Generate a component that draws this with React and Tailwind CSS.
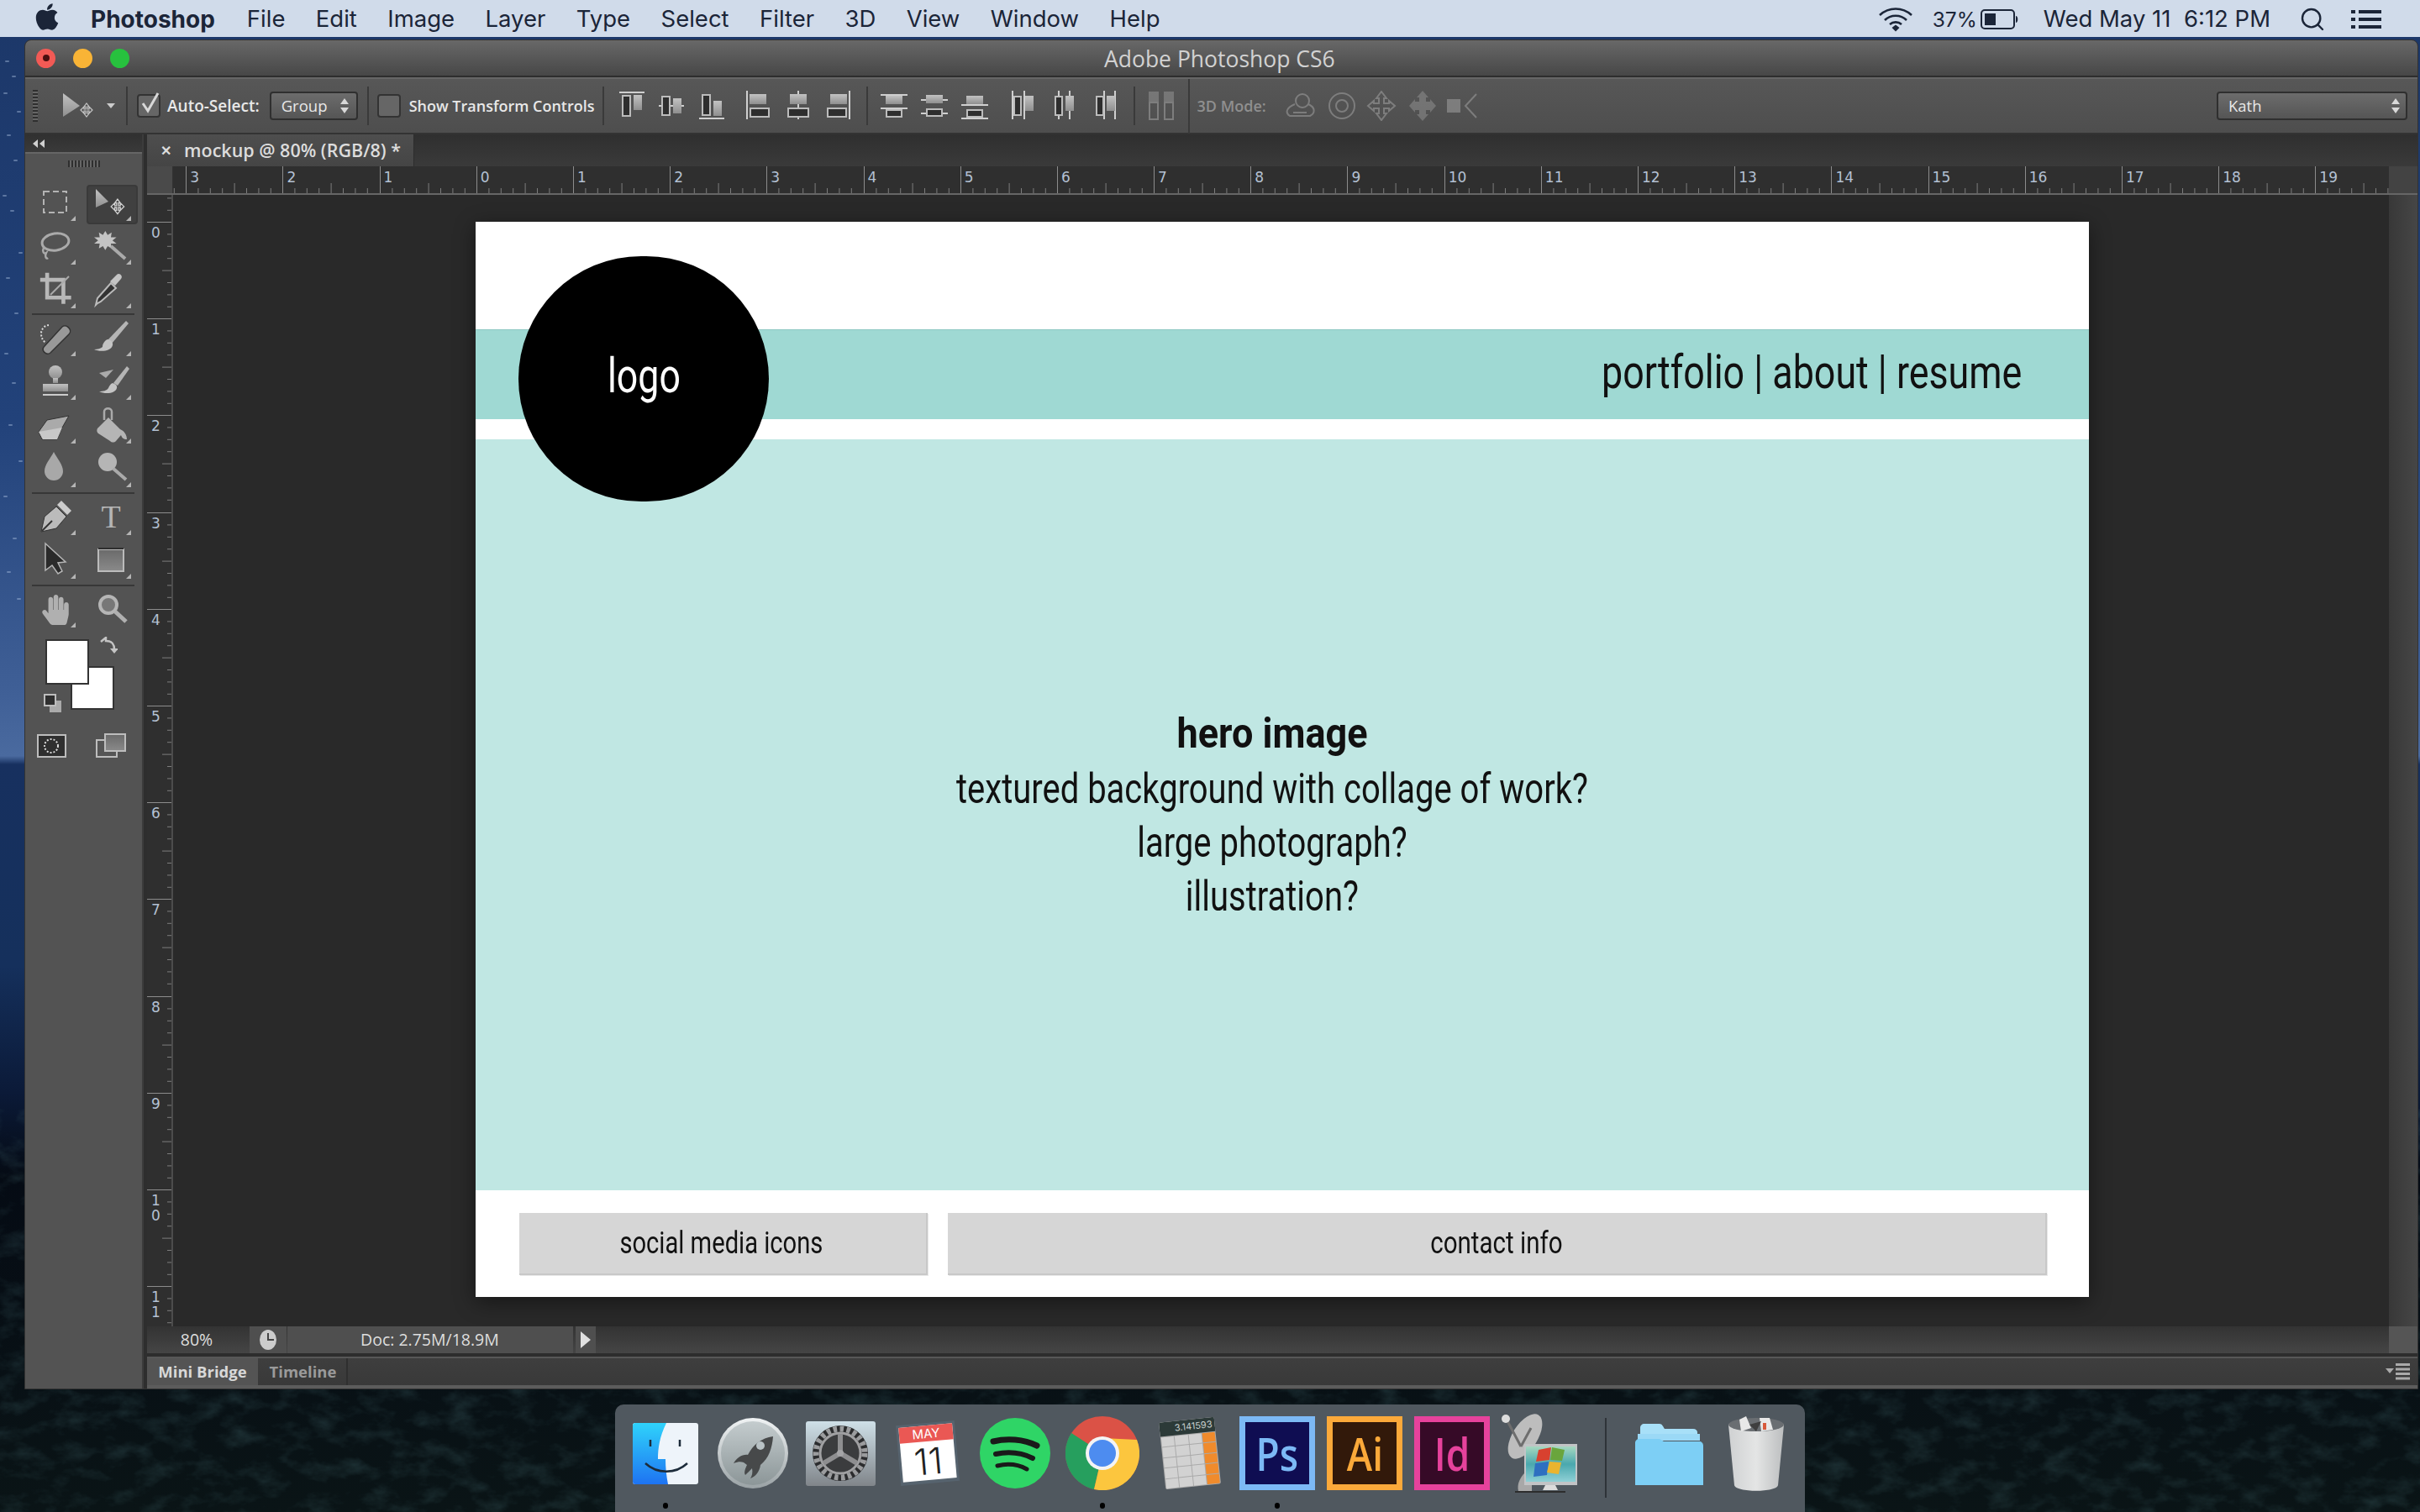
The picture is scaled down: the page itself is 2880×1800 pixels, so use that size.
import React from "react";
import { FaApple, FaHandPaper } from "react-icons/fa";
import { Search } from "lucide-react";

const narrow = "font-['Roboto',sans-serif]";
const ui = "font-['Open_Sans',sans-serif]";

const menus = ["File", "Edit", "Image", "Layer", "Type", "Select", "Filter", "3D", "View", "Window", "Help"];

const MenuBar = () => (
  <div className="relative flex h-[44px] items-center bg-[#d0dbea] pt-[2px] font-['Inter',sans-serif] text-[27.5px] leading-none text-[#1b2538]">
    <FaApple className="ml-[41px] mt-[-6px] h-[36px] w-[30px]" />
    <span className="ml-[37px] text-[28px] font-bold">Photoshop</span>
    <div className="ml-[38px] flex gap-[36.4px]">
      {menus.map((m) => (
        <span key={m}>{m}</span>
      ))}
    </div>
    <div className="ml-auto flex items-center">
      <svg width="42" height="30" viewBox="0 0 42 30" fill="none" stroke="#1b2538" strokeWidth="2.6">
        <path d="M2 10c11-10 27-10 38 0" />
        <path d="M8 16c7-7 19-7 26 0" />
        <path d="M14 21c4-3.500 10-3.500 14 0" />
        <path d="M16.500 25l4.500-3.500 4.500 3.500-4.500 4.500z" fill="#1b2538" stroke="none" />
      </svg>
      <span className="ml-[23px] text-[24.5px]">37%</span>
      <svg className="ml-[4px]" width="46" height="26" viewBox="0 0 46 26" fill="none">
        <rect x="1" y="2" width="39" height="22" rx="4" stroke="#1b2538" strokeWidth="2" />
        <rect x="5" y="6" width="13" height="14" fill="#1b2538" />
        <path d="M42 9c3 0 3 8 0 8z" fill="#1b2538" />
      </svg>
      <span className="ml-[29px] whitespace-pre text-[27.5px]">Wed May 11  6:12 PM</span>
      <Search className="ml-[34px] h-[32px] w-[32px]" strokeWidth={1.8} />
      <svg className="ml-[30px] mr-[46px]" width="36" height="22" viewBox="0 0 36 22" fill="#1b2538">
        <rect x="0" y="0" width="5" height="4" />
        <rect x="9" y="0" width="27" height="4" />
        <rect x="0" y="9" width="5" height="4" />
        <rect x="9" y="9" width="27" height="4" />
        <rect x="0" y="18" width="5" height="4" />
        <rect x="9" y="18" width="27" height="4" />
      </svg>
    </div>
  </div>
);

const Light = ({ bg, children }) => <span className={`h-[23px] w-[23px] rounded-full ${bg} flex items-center justify-center`}>{children}</span>;

const TitleBar = () => (
  <div className="relative flex h-[44px] items-center border-b-2 border-[#2e2e2e] bg-[linear-gradient(#686868,#474747)] pl-[13px]">
    <div className="flex gap-[21px]">
      <Light bg="bg-[#f25a55]">
        <span className="h-[8px] w-[8px] rounded-full bg-[#4a0f0f]" />
      </Light>
      <Light bg="bg-[#f9b436]" />
      <Light bg="bg-[#27c13e]" />
    </div>
    <span className={`${ui} absolute left-[1284px] top-[6px] text-[26.5px] leading-[32px] text-[#d2d2d2]`}>Adobe Photoshop CS6</span>
  </div>
);

const Sep = ({ ml, full }) => <span className={`w-[2px] shrink-0 bg-[#3a3a3a] ${full ? "h-[65px]" : "h-[46px]"} ${ml}`} />;

const Updown = () => (
  <svg width="12" height="20" viewBox="0 0 12 20" fill="#d8d8d8">
    <path d="M6 1l5 7H1zM6 19l5-7H1z" />
  </svg>
);

const Check = ({ ml, checked }) => (
  <span className={`relative h-[28px] w-[28px] shrink-0 rounded-[4px] border-2 border-[#333] bg-[#666] ${ml}`}>
    {checked && (
      <svg className="absolute -top-[6px] left-[3px]" width="24" height="30" viewBox="0 0 24 30" fill="none" stroke="#d8d8d8" strokeWidth="3">
        <path d="M2 15l6 9L20 3" />
      </svg>
    )}
  </span>
);

// a bar with two blocks, used by all of the align buttons
const AlignIcon = ({ ml, w = 30, bars, out, solid }) => (
  <svg className={`shrink-0 ${ml}`} width={w} height="36" viewBox={`0 0 ${w} 36`}>
    {bars.map((b, i) => (
      <rect key={i} x={b[0]} y={b[1]} width={b[2]} height={b[3]} fill="#cfcfcf" />
    ))}
    {out.map((r, i) => (
      <rect key={i} x={r[0] + 1} y={r[1] + 1} width={r[2] - 2} height={r[3] - 2} fill="#2e2e2e" stroke="#bcbcbc" strokeWidth="2" />
    ))}
    {solid.map((r, i) => (
      <rect key={i} x={r[0]} y={r[1]} width={r[2]} height={r[3]} fill="url(#ps-gray)" />
    ))}
  </svg>
);

const cross = "M2 9l4-4v3h2V5H6l3-4 3 4h-2v3h2V5l4 4-4 4v-3h-2v3h2l-3 4-3-4h2v-3H6v3z";

const OptionsBar = () => (
  <div className="flex h-[68px] items-center border-b-2 border-t-2 border-b-[#333] border-t-[#666] bg-[linear-gradient(#575757,#4e4e4e)] text-[#e8e8e8]">
    <div className="ml-[9px] h-[38px] w-[6px] bg-[repeating-linear-gradient(#2f2f2f_0_2px,#666_2px_4px)]" />
    <svg className="ml-[30px]" width="38" height="30" viewBox="0 0 38 30" fill="url(#ps-gray)">
      <path d="M0 0l20 15L0 28z" />
      <path d={cross} transform="translate(19 11)" fill="none" stroke="#c4c4c4" strokeWidth="1.200" />
    </svg>
    <svg className="ml-[14px]" width="10" height="6" viewBox="0 0 10 6" fill="#ccc">
      <path d="M0 0h10L5 6z" />
    </svg>
    <Sep ml="ml-[13px]" />
    <Check ml="ml-[11px]" checked />
    <span className={`${ui} ml-[8px] text-[19px] font-semibold`}>Auto-Select:</span>
    <div className={`${ui} ml-[12px] flex h-[34px] w-[105px] items-center justify-between rounded-[4px] border-2 border-[#2f2f2f] bg-[linear-gradient(#6c6c6c,#555)] pl-[12px] pr-[8px] text-[18.5px] font-medium`}>
      Group <Updown />
    </div>
    <Sep ml="ml-[11px]" />
    <Check ml="ml-[10px]" />
    <span className={`${ui} ml-[10px] text-[18px] font-semibold`}>Show Transform Controls</span>
    <Sep ml="ml-[9px]" />
    <AlignIcon ml="ml-[18px]" bars={[[0, 1, 30, 2]]} out={[[3, 5, 11, 26]]} solid={[[17, 5, 10, 18]]} />
    <AlignIcon ml="ml-[17px]" bars={[[0, 17, 30, 2]]} out={[[3, 6, 11, 24]]} solid={[[17, 9, 10, 18]]} />
    <AlignIcon ml="ml-[18px]" bars={[[0, 32, 30, 2]]} out={[[3, 4, 11, 26]]} solid={[[17, 12, 10, 18]]} />
    <AlignIcon ml="ml-[26px]" w={28} bars={[[0, 0, 2, 34]]} out={[[4, 20, 24, 12]]} solid={[[4, 4, 20, 12]]} />
    <AlignIcon ml="ml-[20px]" w={28} bars={[[13, 0, 2, 34]]} out={[[1, 20, 26, 12]]} solid={[[4, 4, 20, 12]]} />
    <AlignIcon ml="ml-[20px]" w={28} bars={[[26, 0, 2, 34]]} out={[[0, 20, 24, 12]]} solid={[[4, 4, 20, 12]]} />
    <Sep ml="ml-[19px]" />
    <AlignIcon ml="ml-[15px]" w={32} bars={[[0, 4, 32, 2], [0, 20, 32, 2]]} out={[[6, 22, 20, 10]]} solid={[[6, 6, 20, 10]]} />
    <AlignIcon ml="ml-[16px]" w={32} bars={[[0, 10, 32, 2], [0, 26, 32, 2]]} out={[[6, 21, 20, 10]]} solid={[[6, 5, 20, 10]]} />
    <AlignIcon ml="ml-[16px]" w={32} bars={[[0, 16, 32, 2], [0, 32, 32, 2]]} out={[[6, 22, 20, 10]]} solid={[[6, 6, 20, 10]]} />
    <AlignIcon ml="ml-[28px]" w={26} bars={[[0, 0, 2, 34], [14, 0, 2, 34]]} out={[[2, 6, 10, 24]]} solid={[[16, 6, 10, 18]]} />
    <AlignIcon ml="ml-[23px]" w={26} bars={[[6, 0, 2, 34], [19, 0, 2, 34]]} out={[[2, 6, 10, 24]]} solid={[[15, 6, 10, 18]]} />
    <AlignIcon ml="ml-[23px]" w={26} bars={[[11, 0, 2, 34], [24, 0, 2, 34]]} out={[[2, 6, 10, 24]]} solid={[[15, 6, 10, 18]]} />
    <Sep ml="ml-[21px]" />
    <svg className="ml-[16px] opacity-50" width="30" height="36" viewBox="0 0 30 36" fill="none" stroke="#aaa" strokeWidth="2">
      <rect x="1" y="14" width="10" height="20" />
      <rect x="19" y="14" width="10" height="20" />
      <rect x="0" y="1" width="12" height="12" fill="#999" stroke="none" />
      <rect x="18" y="1" width="12" height="12" fill="#999" stroke="none" />
    </svg>
    <Sep ml="ml-[17px]" full />
    <span className={`${ui} ml-[9px] text-[18px] font-semibold text-[#8f8f8f]`}>3D Mode:</span>
    <svg className="ml-[22px] opacity-60" width="230" height="36" viewBox="0 0 230 36" fill="none" stroke="#9a9a9a" strokeWidth="2">
      <circle cx="21" cy="12" r="8" />
      <path d="M12 16c-10 4-12 10-6 14h24c6-3 7-10-2-14" />
      <path d="M10 26h16" />
      <circle cx="68" cy="18" r="15" />
      <circle cx="68" cy="18" r="7" />
      <path d="M115 1l6 8h-3v6h6v-3l7 6-7 6v-3h-6v6h3l-6 8-6-8h3v-6h-6v3l-7-6 7-6v3h6V9h-3z" />
      <path d="M164 0l7 8h-3v5h5v-3l7 8-7 8v-3h-5v5h3l-7 8-7-8h3v-5h-5v3l-7-8 7-8v3h5V8h-3z" fill="#8a8a8a" stroke="none" />
      <rect x="193" y="10" width="16" height="16" fill="#9a9a9a" stroke="none" />
      <path d="M228 4l-13 14 13 14" />
    </svg>
    <div className={`${ui} ml-auto mr-[12px] flex h-[34px] w-[227px] items-center justify-between rounded-[4px] border-2 border-[#2f2f2f] bg-[linear-gradient(#6c6c6c,#555)] pl-[12px] pr-[6px] text-[18.5px] font-medium`}>
      Kath <Updown />
    </div>
  </div>
);

const Corner = () => <span className="absolute bottom-[4px] right-[9px] h-0 w-0 border-b-[6px] border-l-[6px] border-b-[#b5b5b5] border-l-transparent" />;

const Tool = ({ children, corner = true, selected }) => (
  <div className="relative flex h-full items-center justify-center">
    {selected && <span className="absolute bottom-[0px] left-[4px] right-[1px] top-[5px] rounded-[4px] border-2 border-[#3a3a3a] bg-[#404040]" />}
    <span className="relative flex">{children}</span>
    {corner && <Corner />}
  </div>
);

const Ic = ({ children }) => (
  <svg width="44" height="44" viewBox="0 0 44 44" fill="url(#ps-gray)" stroke="none">
    {children}
  </svg>
);

const toolRows = [
  [
    [
      <Ic key="a"><rect x="8" y="9" width="27" height="25" fill="none" stroke="#b4b4b4" strokeWidth="2" strokeDasharray="7 4" /></Ic>,
      <Ic key="b">
        <path d="M4 6l15 15L4 28z" />
        <path d={cross} transform="translate(20 17) scale(1.100)" fill="none" stroke="#d0d0d0" strokeWidth="1.200" />
      </Ic>,
      true,
    ],
    [
      <Ic key="a">
        <ellipse cx="22" cy="17" rx="16" ry="10" fill="none" stroke="#aaa" strokeWidth="3" transform="rotate(-8 22 17)" />
        <path d="M8 24c-2 4 0 8 3 6-2 4 0 8 2 6" fill="none" stroke="#aaa" strokeWidth="2.500" />
      </Ic>,
      <Ic key="b">
        <path d="M14 2l3 5 5-3-1 6 7 0-5 4 5 4-7 0 1 6-5-3-3 5-3-5-5 3 1-6-7 0 5-4-5-4 7 0-1-6 5 3z" fill="#c4c4c4" transform="translate(2 2) scale(.95)" />
        <path d="M22 22l17 15" stroke="#aaa" strokeWidth="4" />
      </Ic>,
    ],
    [
      <Ic key="a">
        <path d="M11 2v32h31M2 11h30V42" fill="none" stroke="#b8b8b8" strokeWidth="5" transform="translate(2 0) scale(.92)" />
        <path d="M16 28l22-22" stroke="#aaa" strokeWidth="2" />
      </Ic>,
      <Ic key="b">
        <path d="M6 38l-2 2 2-8 16-18 6 6-18 16z" fill="#333" stroke="#bbb" strokeWidth="2" />
        <path d="M21 12l8-8c3-3 8 2 5 5l-7 8z" fill="#c4c4c4" />
      </Ic>,
    ],
  ],
  [
    [
      <Ic key="a">
        <path d="M9 32L30 9c5-4 13 4 8 9L16 40c-5 4-12-3-7-8z" fill="#999" stroke="#333" strokeWidth="1.500" />
        <path d="M14 7a10 10 0 0 0-9 10c0 5 2 8 5 11" fill="none" stroke="#ddd" strokeWidth="2" strokeDasharray="2 2" />
      </Ic>,
      <Ic key="b">
        <path d="M40 2l3 3-20 24-5-4z" fill="#b5b5b5" />
        <path d="M18 24c-3 1-6 5-6 9-2 2-6 3-10 3 6 3 20 3 22-5 1-3-2-6-6-7z" fill="#c4c4c4" />
      </Ic>,
    ],
    [
      <Ic key="a">
        <circle cx="22" cy="11" r="8" />
        <path d="M19 18h6v6h-6z" />
        <rect x="7" y="25" width="30" height="9" />
        <rect x="7" y="37" width="30" height="2" fill="#ccc" />
      </Ic>,
      <Ic key="b">
        <path d="M41 4l3 3-14 20-5-3z" fill="#b5b5b5" />
        <path d="M24 24c-3 1-4 4-5 6-2 3-6 4-11 4 8 4 20 2 21-4 1-3-2-5-5-6z" fill="#c4c4c4" />
        <path d="M25 8L8 12l8 6" fill="#aaa" />
      </Ic>,
    ],
    [
      <Ic key="a">
        <path d="M2 30l10-14 26-5-8 14-6 14H6z" fill="#aaa" stroke="#333" strokeWidth="1" />
        <path d="M2 30l5 9h17l6-14z" fill="#c8c8c8" />
      </Ic>,
      <Ic key="b">
        <path d="M6 26l13-13 14 14c5 2 8 7 8 12-4 0-6-2-7-5l-6 7c-2 2-5 2-7 0L7 32c-2-2-2-4-1-6z" fill="#b5b5b5" />
        <path d="M14 16V6c0-5 9-5 9 0v10" fill="none" stroke="#aaa" strokeWidth="2.500" />
      </Ic>,
    ],
    [
      <Ic key="a"><path d="M20 2c4 8 11 15 11 23a11 11 0 0 1-22 0c0-8 7-15 11-23z" fill="#a8a8a8" /></Ic>,
      <Ic key="b">
        <circle cx="18" cy="14" r="11" fill="#b5b5b5" />
        <path d="M25 22l15 13" stroke="#aaa" strokeWidth="4" />
      </Ic>,
    ],
  ],
  [
    [
      <Ic key="a">
        <path d="M5 40l4-18 14-12 12 12-12 14z" fill="#bbb" stroke="#333" strokeWidth="1" />
        <path d="M6 39l12-12" stroke="#333" strokeWidth="2" />
        <path d="M24 8l5-5 12 12-5 5z" fill="#ccc" />
      </Ic>,
      <span key="b" className="flex h-[44px] w-[44px] items-center justify-center font-['Liberation_Serif',serif] text-[38px] leading-none text-[#b5b5b5]">T</span>,
    ],
    [
      <Ic key="a"><path d="M10 2l24 22-9 1 5 10-5 3-7-10-8 6z" fill="#2a2a2a" stroke="#b5b5b5" strokeWidth="1.500" /></Ic>,
      <Ic key="b">
        <rect x="7" y="9" width="30" height="26" fill="url(#ps-dark)" stroke="#bbb" strokeWidth="2" />
        <rect x="7" y="7" width="30" height="2" fill="#2f2f2f" />
      </Ic>,
    ],
  ],
];

const ToolPanel = () => (
  <div className="relative flex w-[141px] shrink-0 flex-col bg-[#535353] border-r-2 border-[#3c3c3c]">
    <div className="flex h-[23px] items-center bg-[linear-gradient(#303030,#3a3a3a)] pl-[8px] border-b-2 border-[#666]">
      <svg width="16" height="10" viewBox="0 0 16 10" fill="#d0d0d0">
        <path d="M7 0v10L1 5zM15 0v10L9 5z" />
      </svg>
    </div>
    <div className="mx-auto mt-[8px] h-[8px] w-[38px] bg-[repeating-linear-gradient(90deg,#2f2f2f_0_2px,#666_2px_4px)]" />
    <div className="grid grid-cols-[66px_66px] pl-[3px] pt-[16px]">
      {toolRows.map((group, g) => (
        <React.Fragment key={g}>
          {g > 0 && <div className="col-span-2 mx-[5px] mb-[1px] mt-[2px] h-[2px] bg-[#373737]" />}
          {group.map((row, r) => (
            <React.Fragment key={r}>
              <div className="h-[52px]"><Tool>{row[0]}</Tool></div>
              <div className="h-[52px]"><Tool selected={row[2]}>{row[1]}</Tool></div>
            </React.Fragment>
          ))}
        </React.Fragment>
      ))}
      <div className="col-span-2 mx-[5px] mb-[3px] mt-[3px] h-[2px] bg-[#373737]" />
      <div className="h-[50px]">
        <Tool>
          <FaHandPaper className="h-[36px] w-[36px] text-[#b0b0b0]" />
        </Tool>
      </div>
      <div className="h-[50px]">
        <Tool corner={false}>
          <Ic>
            <circle cx="19" cy="16" r="10" fill="#777" stroke="#b5b5b5" strokeWidth="4" />
            <path d="M27 24l13 12" stroke="#b0b0b0" strokeWidth="5" />
          </Ic>
        </Tool>
      </div>
    </div>
    <div className="relative ml-[24px] mt-[10px] h-[86px] w-[84px]">
      <span className="absolute left-[30px] top-[32px] h-[52px] w-[52px] border-2 border-[#333] bg-white" />
      <span className="absolute left-0 top-0 h-[54px] w-[52px] border-2 border-[#333] bg-white" />
      <svg className="absolute left-[64px] top-[-3px]" width="22" height="22" viewBox="0 0 22 22" fill="none" stroke="#c4c4c4" strokeWidth="2.500">
        <path d="M2 6l6-5v4c7 0 10 3 10 10" />
        <path d="M13 14h10l-5 6z" fill="#c4c4c4" stroke="none" />
      </svg>
      <svg className="absolute -left-[2px] top-[65px]" width="21" height="22" viewBox="0 0 21 22">
        <rect x="7" y="8" width="14" height="14" fill="#aaa" />
        <rect x="1" y="1" width="13" height="13" fill="#2f2f2f" stroke="#bdbdbd" strokeWidth="2" />
      </svg>
    </div>
    <div className="ml-[14px] mt-[26px] flex items-start gap-[34px]">
      <svg width="36" height="30" viewBox="0 0 36 30" fill="none">
        <rect x="1" y="2" width="33" height="26" fill="#2f2f2f" stroke="#bdbdbd" strokeWidth="2" />
        <circle cx="17" cy="15" r="8" stroke="#ddd" strokeWidth="2" strokeDasharray="2 2" />
      </svg>
      <div className="relative">
        <svg width="36" height="30" viewBox="0 0 36 30">
          <rect x="1" y="8" width="24" height="20" fill="#555" stroke="#bdbdbd" strokeWidth="2" />
          <rect x="11" y="1" width="24" height="20" fill="url(#ps-dark)" stroke="#bdbdbd" strokeWidth="2" />
        </svg>
      </div>
    </div>
  </div>
);

const HRulerCell = ({ label }) => (
  <div className="relative h-full w-[115.2px] shrink-0">
    <span className="absolute left-[5px] top-[4px] font-['DejaVu_Sans',sans-serif] text-[17px] leading-[18px] text-[#b4c1d3]">{label}</span>
    <svg className="absolute inset-0" width="115.2" height="33">
      <rect x="0" y="0" width="1" height="33" fill="#8c8c8c" />
      {[1, 2, 3, 4, 5, 6, 7].map((i) => (
        <rect key={i} x={i * 14.4} y={i === 4 ? 20 : 26} width="1" height={i === 4 ? 13 : 7} fill="#7d7d7d" />
      ))}
    </svg>
  </div>
);

const VRulerCell = ({ label }) => (
  <div className="relative h-[115.2px] w-full shrink-0">
    <span className="absolute left-[5px] top-[4px] flex flex-col font-['DejaVu_Sans',sans-serif] text-[17px] leading-[18px] text-[#b4c1d3]">
      {String(label).split("").map((c, i) => (
        <span key={i}>{c}</span>
      ))}
    </span>
    <svg className="absolute inset-0" width="31" height="115.2">
      <rect x="0" y="0" width="31" height="1" fill="#8c8c8c" />
      {[1, 2, 3, 4, 5, 6, 7].map((i) => (
        <rect key={i} x={i === 4 ? 18 : 24} y={i * 14.4} width={i === 4 ? 13 : 7} height="1" fill="#7d7d7d" />
      ))}
    </svg>
  </div>
);

// first and last cells only peek in from the clipped edges, so they carry no number
const hLabels = ["", 3, 2, 1, 0, 1, 2, 3, 4, 5, 6, 7, 8, 9, 10, 11, 12, 13, 14, 15, 16, 17, 18, 19, ""];
const vLabels = ["", 0, 1, 2, 3, 4, 5, 6, 7, 8, 9, 10, 11, ""];

const Mockup = () => (
  <div className={`${narrow} relative flex h-[1280px] w-[1920px] shrink-0 flex-col bg-white text-[#111] shadow-[0_6px_24px_rgba(0,0,0,0.45)]`}>
    <div className="h-[128px]" />
    <div className="flex h-[107px] items-center justify-end border-t border-[#8fc9c3] bg-[#9fd9d3] pb-[6px] pr-[80px] text-[56px] leading-none">
      <span className="origin-right scale-x-[0.8] whitespace-nowrap">portfolio | about | resume</span>
    </div>
    <div className="h-[24px]" />
    <div className="flex h-[894px] flex-col items-center whitespace-nowrap bg-[#c0e7e3] pr-[24px] pt-[318px] text-center text-[50px] leading-[64px]">
      <span className="scale-x-[0.9] font-bold">hero image</span>
      <span className="mt-[2px] scale-x-[0.8]">textured background with collage of work?</span>
      <span className="scale-x-[0.8]">large photograph?</span>
      <span className="scale-x-[0.8]">illustration?</span>
    </div>
    <div className="flex flex-1 gap-[24px] pl-[52px] pt-[27px] text-[36px]">
      <div className="flex h-[74px] w-[486px] items-center justify-center border-b-2 border-r-2 border-[#c8c8c8] bg-[#d6d6d6] shadow-[1px_1px_0_#e8e8e8]">
        <span className="-ml-[4px] scale-x-[0.81]">social media icons</span>
      </div>
      <div className="flex h-[74px] w-[1308px] items-center justify-center border-b-2 border-r-2 border-[#c8c8c8] bg-[#d6d6d6] shadow-[1px_1px_0_#e8e8e8]">
        <span className="scale-x-[0.82]">contact info</span>
      </div>
    </div>
    <div className="absolute left-[51px] top-[41px] flex h-[292px] w-[298px] items-center justify-center rounded-full bg-black pb-[8px] text-[58px] leading-none text-white">
      <span className="scale-x-[0.77]">logo</span>
    </div>
  </div>
);

const DocArea = () => (
  <div className="flex min-w-0 flex-1 flex-col">
    <div className="flex h-[38px] bg-[linear-gradient(#2f2f2f,#3a3a3a)] pt-[0px]">
      <div className={`${ui} flex w-[318px] items-center border-r border-[#2d2d2d] bg-[linear-gradient(#4e4e4e,#454545)] pl-[16px] text-[21.5px] font-semibold text-[#dcdcdc]`}>
        <span className="text-[16px] leading-none">✕</span>
        <span className="ml-[15px] whitespace-nowrap">mockup @ 80% (RGB/8) *</span>
      </div>
    </div>
    <div className="flex h-[34px] border-b-2 border-[#666]">
      <div className="h-full w-[31px] shrink-0 bg-[#4a4a4a] border-r border-[#333]" />
      <div className="flex min-w-0 flex-1 overflow-hidden bg-[#2f2f2f]">
        <div className="-ml-[100px] flex">
          {hLabels.map((l, i) => (
            <HRulerCell key={i} label={l} />
          ))}
        </div>
      </div>
      <div className="w-[34px] shrink-0 bg-[#434343]" />
    </div>
    <div className="flex min-h-0 flex-1">
      <div className="h-full w-[31px] shrink-0 overflow-hidden border-r-2 border-[#4c4c4c] bg-[#2f2f2f]">
        <div className="-mt-[83.2px]">
          {vLabels.map((l, i) => (
            <VRulerCell key={i} label={l} />
          ))}
        </div>
      </div>
      <div className="flex min-w-0 flex-1 bg-[#292929] pl-[360px] pt-[32px]">
        <Mockup />
      </div>
      <div className="w-[34px] shrink-0 bg-[linear-gradient(90deg,#383838,#464646)]" />
    </div>
    <div className={`${ui} flex h-[32px] items-center bg-[linear-gradient(#333,#454545)] text-[19.5px] text-[#dedede]`}>
      <div className="flex h-full w-[122px] items-center justify-center pr-[4px]">80%</div>
      <div className="flex h-full w-[44px] items-center justify-center bg-[#4f4f4f]">
        <svg width="22" height="26" viewBox="0 0 22 26" fill="#ccc">
          <ellipse cx="11" cy="13" rx="10" ry="12" />
          <path d="M11 5v8l7 0" fill="none" stroke="#444" strokeWidth="2" />
        </svg>
      </div>
      <div className="ml-[1px] flex h-full w-[340px] items-center bg-[#4f4f4f] pl-[87px]">Doc: 2.75M/18.9M</div>
      <div className="ml-[3px] flex h-full w-[24px] items-center justify-center bg-[#4f4f4f]">
        <svg width="12" height="20" viewBox="0 0 12 20" fill="#e0e0e0">
          <path d="M0 0l12 10L0 20z" />
        </svg>
      </div>
      <div className="ml-auto h-full w-[34px] bg-[#555]" />
    </div>
    <div className="h-[6px] border-b-2 border-[#575757] bg-[#2d2d2d]" />
    <div className={`${ui} flex h-[36px] items-stretch bg-[linear-gradient(#3e3e3e,#393939)] border-b-[4px] border-[#5c5c5c] text-[18.5px] font-bold`}>
      <div className="flex w-[132px] items-center justify-center bg-[#545454] text-[#d8d8d8]">Mini Bridge</div>
      <div className="ml-[2px] flex w-[105px] items-center justify-center border-r-2 border-[#2f2f2f] text-[#9a9a9a]">Timeline</div>
      <svg className="ml-auto mr-[8px] mt-[6px]" width="30" height="20" viewBox="0 0 30 20" fill="#aaa">
        <path d="M0 6h10l-5 6z" />
        <path d="M12 0h17v3H12zM12 5.500h17v3H12zM12 11h17v3H12zM12 16.500h17v3H12z" />
      </svg>
    </div>
  </div>
);

const Slot = ({ children, dot }) => (
  <div className="flex w-[104px] shrink-0 flex-col items-center pt-[8px]">
    <div className="flex h-[100px] w-full items-center justify-center">{children}</div>
    {dot && <span className="mt-[9px] h-[7px] w-[6px] rounded-full bg-black" />}
  </div>
);

const Finder = () => (
  <svg width="78" height="73" viewBox="0 0 78 73">
    <defs>
      <linearGradient id="finder-b" x1="0" y1="0" x2="0" y2="1">
        <stop offset="0" stopColor="#2fd3fb" />
        <stop offset="1" stopColor="#1e73f2" />
      </linearGradient>
    </defs>
    <rect width="78" height="73" rx="3" fill="#eef4fa" />
    <path d="M3 0h37c-8 16-10 30-10 43h9c0 10 1 20 3 30H3c-2 0-3-1-3-3V3c0-2 1-3 3-3z" fill="url(#finder-b)" />
    <path d="M21 20v8M56 20v8" stroke="#1c2b3a" strokeWidth="2.500" fill="none" />
    <path d="M15 48c14 13 36 13 50 0" stroke="#1c2b3a" strokeWidth="2.500" fill="none" />
  </svg>
);

const Rocket = () => (
  <svg width="84" height="84" viewBox="0 0 84 84">
    <defs>
      <linearGradient id="rocket-b" x1="0" y1="0" x2="0" y2="1">
        <stop offset="0" stopColor="#c4ccce" />
        <stop offset="1" stopColor="#8c9698" />
      </linearGradient>
      <linearGradient id="rocket-r" x1="0" y1="0" x2="0" y2="1">
        <stop offset="0" stopColor="#f0f3f4" />
        <stop offset="1" stopColor="#9aa2a5" />
      </linearGradient>
    </defs>
    <circle cx="42" cy="42" r="42" fill="url(#rocket-r)" />
    <circle cx="42" cy="42" r="38" fill="url(#rocket-b)" />
    <path d="M66 22c-14 2-24 10-30 22-6-1-13 3-17 10 5-2 9-2 12-1l4 3c-2 4-4 9-2 12 3-3 6-6 8-8 1 5 0 9-2 12 6-2 11-8 12-16 10-8 14-20 15-34z" fill="#47494a" />
    <circle cx="51" cy="33" r="5" fill="#b8c1c4" />
  </svg>
);

const Prefs = () => (
  <svg width="83" height="77" viewBox="0 0 83 77">
    <defs>
      <linearGradient id="prefs-b" x1="0" y1="0" x2="0" y2="1">
        <stop offset="0" stopColor="#cfe0e8" />
        <stop offset="1" stopColor="#80858a" />
      </linearGradient>
    </defs>
    <rect width="83" height="77" rx="3" fill="url(#prefs-b)" />
    <circle cx="41" cy="38" r="33" fill="#2b2c2e" />
    <circle cx="41" cy="38" r="29" fill="none" stroke="#9b9c9e" strokeWidth="7" strokeDasharray="4.500 3.500" />
    <circle cx="41" cy="38" r="24" fill="#3b3c3e" stroke="#a0a0a2" strokeWidth="3" />
    <path d="M41 38V15M41 38L21 50M41 38l20 12" stroke="#8e8e90" strokeWidth="6" fill="none" />
    <circle cx="41" cy="38" r="4" fill="#a5a5a7" />
  </svg>
);

const Calendar = () => (
  <div className="relative h-[72px] w-[70px] rotate-[-5deg] bg-[#56636e] p-[3px] pb-[4px]">
    <div className="flex h-full flex-col bg-white">
      <div className="flex h-[19px] items-center justify-center bg-[#ea5854] font-['Inter',sans-serif] text-[15px] leading-none text-white">MAY</div>
      <div className="flex flex-1 items-center justify-center font-['Inter',sans-serif] text-[43px] font-light leading-none text-[#222]">11</div>
    </div>
  </div>
);

const Spotify = () => (
  <svg width="84" height="84" viewBox="0 0 84 84" fill="none" stroke="#1a1a1a" strokeLinecap="round">
    <circle cx="42" cy="42" r="42" fill="#2fd566" stroke="none" />
    <path d="M16 28c16-4 36-3 52 5" strokeWidth="7" />
    <path d="M19 43c14-3 30-2 44 5" strokeWidth="6" />
    <path d="M21 57c12-3 24-2 35 4" strokeWidth="5" />
  </svg>
);

const Chrome = () => (
  <svg width="88" height="88" viewBox="0 0 88 88">
    <circle cx="44" cy="44" r="44" fill="#db5246" />
    <path d="M44 44L7 20A44 44 0 0 0 34 87z" fill="#269f5e" />
    <path d="M44 44L34 87A44 44 0 0 0 85 28L44 26z" fill="#fcc63e" />
    <circle cx="44" cy="44" r="20" fill="#f4f4f4" />
    <circle cx="44" cy="44" r="16" fill="#4d8cf0" />
  </svg>
);

const Calculator = () => (
  <div className="flex h-[80px] w-[66px] rotate-[-6deg] flex-col overflow-hidden rounded-[2px] bg-[#aaa]">
    <div className="flex h-[17px] items-center justify-end bg-[#2c3a38] pr-[3px] font-['Inter',sans-serif] text-[11px] leading-none text-[#c8d0ce]">3.141593</div>
    <div className="grid flex-1 grid-cols-4 grid-rows-5 gap-[1px] p-[1px]">
      {Array.from({ length: 20 }).map((_, i) => (
        <span key={i} className={i % 4 === 3 ? "bg-[#f08b2c]" : "bg-[#d2d2d2]"} />
      ))}
    </div>
  </div>
);

const Adobe = ({ border, bg, text, label, scale }) => (
  <div className={`flex h-[88px] w-[90px] items-center justify-center border-[7px] ${border} ${bg}`}>
    <span className={`font-['Open_Sans',sans-serif] text-[54px] font-semibold leading-none ${scale} ${text}`}>{label}</span>
  </div>
);

const Sat = () => (
  <svg width="91" height="94" viewBox="0 0 91 94">
    <defs>
      <linearGradient id="sat-s" x1="0" y1="0" x2="0" y2="1">
        <stop offset="0" stopColor="#a6d8c0" />
        <stop offset="0.5" stopColor="#4aa8ae" />
        <stop offset="1" stopColor="#8fd0d6" />
      </linearGradient>
    </defs>
    <ellipse cx="28" cy="27" rx="15" ry="30" fill="#bdbdbd" transform="rotate(32 28 27)" />
    <path d="M5 5l18 34M23 39l12-22" stroke="#6e6e6e" strokeWidth="3" fill="none" />
    <circle cx="5" cy="6" r="5" fill="#ddd" />
    <path d="M20 92c-2-8 2-16 8-22l8 4v18z" fill="#a8a8a8" />
    <path d="M16 93h60" stroke="#2d2d2d" strokeWidth="2" />
    <rect x="27" y="36" width="63" height="49" fill="#c2c4c6" />
    <rect x="29" y="39" width="59" height="42" fill="url(#sat-s)" />
    <path d="M44 43l15-3-2 15-16 2z" fill="#d8412f" />
    <path d="M60 40l15 3-3 13-14-1z" fill="#6aa53c" />
    <path d="M40 59l16-2-2 16-16 2z" fill="#2e6fc0" />
    <path d="M57 57l14 1-3 14-14-2z" fill="#eab42f" />
    <path d="M52 85h12l3 6H49z" fill="#dcdcdc" />
  </svg>
);

const Folder = () => (
  <svg width="81" height="75" viewBox="0 0 81 75">
    <path d="M6 16V7c0-3 2-5 5-5h18c3 0 4 3 6 6h34c3 0 5 2 5 4v6z" fill="#a8e0f8" />
    <path d="M3 22v-8h74v8z" fill="#9bd9f6" />
    <path d="M0 74V25c0-3 2-5 5-5h24l5 3h42c3 0 5 2 5 5v46c0 1 0 1-1 1H1c-1 0-1 0-1-1z" fill="#7dcff5" />
  </svg>
);

const Trash = () => (
  <svg width="68" height="89" viewBox="0 0 68 89">
    <defs>
      <linearGradient id="trash-b" x1="0" y1="0" x2="1" y2="0">
        <stop offset="0" stopColor="#cfd1d2" />
        <stop offset="0.5" stopColor="#e4e5e5" />
        <stop offset="1" stopColor="#bcbebf" />
      </linearGradient>
    </defs>
    <path d="M1 10c0-4 66-4 66 0l-7 72c-1 9-51 9-52 0z" fill="url(#trash-b)" />
    <ellipse cx="34" cy="10" rx="33" ry="8" fill="#6a6e72" />
    <path d="M14 4l8-4 6 14-12 4zM38 2l12 0 4 14-14 2z" fill="#e8e8e8" />
    <path d="M26 10l8 8 6-12z" fill="#3f3f3f" />
    <path d="M42 8h4v8h-4z" fill="#d85a3c" />
  </svg>
);

const Dock = () => (
  <div className="relative ml-[732px] mt-[18px] flex h-[128px] w-[1416px] rounded-t-[10px] bg-[#50585f] pl-[8px]">
    <Slot dot><Finder /></Slot>
    <Slot><Rocket /></Slot>
    <Slot><Prefs /></Slot>
    <Slot><Calendar /></Slot>
    <Slot><Spotify /></Slot>
    <Slot dot><Chrome /></Slot>
    <Slot><Calculator /></Slot>
    <Slot dot><Adobe border="border-[#7cb9f5]" bg="bg-[#0f0d52]" text="text-[#7cb9f5]" label="Ps" scale="scale-x-[0.85]" /></Slot>
    <Slot><Adobe border="border-[#fba93a]" bg="bg-[#32190a]" text="text-[#fba93a]" label="Ai" scale="scale-x-[0.85]" /></Slot>
    <Slot><Adobe border="border-[#e6429c]" bg="bg-[#360a27]" text="text-[#e6429c]" label="Id" scale="scale-x-[0.85]" /></Slot>
    <Slot><Sat /></Slot>
    <div className="ml-[26px] mt-[16px] h-[95px] w-[2px] bg-[#2e3338]" />
    <div className="ml-[22px] flex">
      <Slot><Folder /></Slot>
      <Slot><Trash /></Slot>
    </div>
  </div>
);

// wallpaper drawing: stars high up the left edge, mottled trees along the bottom
const stars = [[6, 72], [14, 90], [4, 110], [20, 132], [8, 160], [16, 190], [3, 232], [12, 250], [22, 300], [7, 330], [17, 372], [5, 420], [14, 455], [10, 505], [22, 548], [4, 590], [15, 640], [8, 680], [20, 712]];

const Wallpaper = () => (
  <svg className="absolute inset-0" width="2880" height="1800">
    <defs>
      <filter id="wp-trees" x="0" y="0" width="100%" height="100%">
        <feTurbulence type="fractalNoise" baseFrequency="0.03 0.05" numOctaves="4" seed="7" />
        <feColorMatrix values="0 0 0 0 0.08  0 0 0 0 0.2  0 0 0 0 0.22  1.8 0 0 0 -0.8" />
      </filter>
    </defs>
    <rect x="0" y="1320" width="2880" height="480" filter="url(#wp-trees)" opacity="0.3" />
    {stars.map((s, i) => (
      <rect key={i} x={s[0]} y={s[1]} width="5" height="2" rx="1" fill="#a9bedd" opacity="0.45" />
    ))}
  </svg>
);

export default function App() {
  return (
    <div className="relative h-[1800px] w-[2880px] overflow-hidden bg-[linear-gradient(180deg,#1c3768_0px,#22427a_500px,#3f5f96_820px,#4a6a9f_900px,#17305f_910px,#15305c_1150px,#0b1a38_1300px,#050b14_1400px,#0a1416_1800px)]">
      {/* shared gradients for the tool icons */}
      <svg className="absolute h-0 w-0">
        <defs>
          <linearGradient id="ps-gray" x1="0" y1="0" x2="0" y2="1">
            <stop offset="0" stopColor="#c2c2c2" />
            <stop offset="1" stopColor="#8f8f8f" />
          </linearGradient>
          <linearGradient id="ps-dark" x1="0" y1="0" x2="0" y2="1">
            <stop offset="0" stopColor="#6a6a6a" />
            <stop offset="1" stopColor="#8a8a8a" />
          </linearGradient>
        </defs>
      </svg>
      <Wallpaper />
      <MenuBar />
      <div className="relative ml-[29px] mt-[3px] flex h-[1607px] w-[2849px] flex-col overflow-hidden rounded-t-[8px] border border-[#333] bg-[#2e2e2e]">
        <TitleBar />
        <OptionsBar />
        <div className="flex min-h-0 flex-1">
          <ToolPanel />
          <div className="w-[4px] shrink-0 bg-[#2e2e2e]" />
          <DocArea />
        </div>
      </div>
      <Dock />
    </div>
  );
}
